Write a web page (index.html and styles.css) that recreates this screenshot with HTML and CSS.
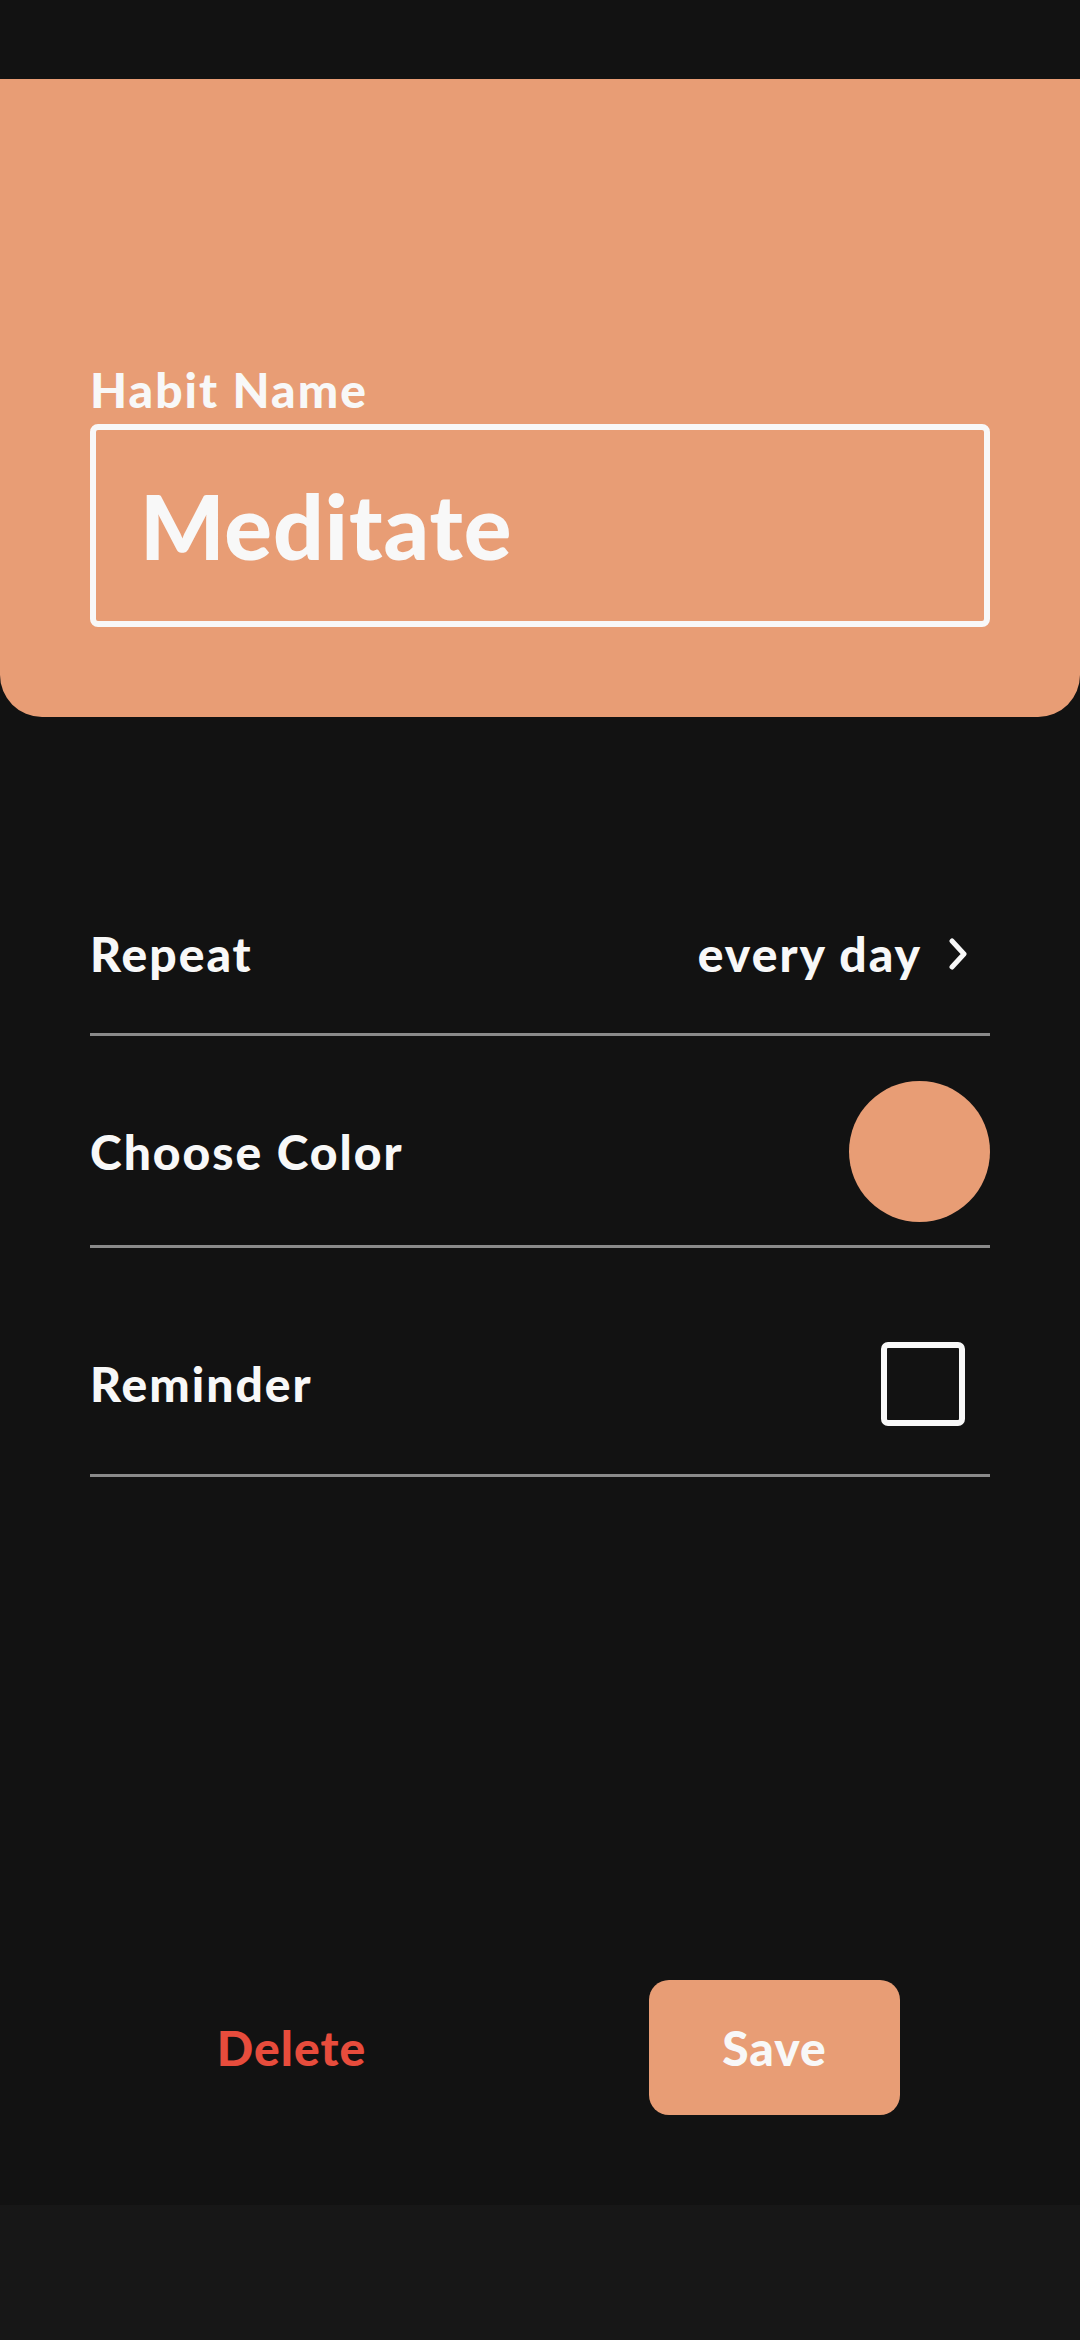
FILE: index.html
```html
<!DOCTYPE html>
<html lang="en">
<head>
<meta charset="utf-8">
<title>Edit Habit</title>
<link rel="stylesheet" href="styles.css">
</head>
<body>
<div class="page">
  <div class="status-bar"></div>
  <header class="header">
    <label class="field-label" for="habit-name">Habit Name</label>
    <input id="habit-name" class="name-input" type="text" value="Meditate">
  </header>
  <main class="content">
    <section class="settings">
      <div class="row row-repeat">
        <span class="row-label">Repeat</span>
        <span class="row-value"><span class="value-text">every day</span>
          <svg class="chevron" width="20" height="32" viewBox="0 0 20 32"><polyline points="4,3 16,16 4,29" fill="none" stroke="#f8f8f8" stroke-width="5" stroke-linecap="round" stroke-linejoin="round"/></svg>
        </span>
      </div>
      <div class="row row-color">
        <span class="row-label">Choose Color</span>
        <span class="swatch"></span>
      </div>
      <div class="row row-reminder">
        <span class="row-label">Reminder</span>
        <span class="checkbox"></span>
      </div>
    </section>
    <div class="actions">
      <button class="btn btn-delete">Delete</button>
      <button class="btn btn-save">Save</button>
    </div>
  </main>
  <div class="nav-bar"></div>
</div>
</body>
</html>
```

FILE: styles.css
```css
* { box-sizing: border-box; }
html, body { margin: 0; padding: 0; }
body {
  background: #121212;
  font-family: "Lato", "Noto Sans", sans-serif;
  color: #f8f8f8;
}
.page {
  width: 1080px;
  height: 2340px;
  display: flex;
  flex-direction: column;
}
.status-bar {
  height: 79px;
  background: #121212;
  flex: none;
}
.header {
  flex: none;
  height: 638px;
  background: #e89d75;
  border-radius: 0 0 42px 42px;
  padding: 287px 90px 90px;
  display: flex;
  flex-direction: column;
}
.field-label {
  font-size: 48px;
  line-height: 48px;
  font-weight: 900;
  letter-spacing: 2px;
  color: #f8f8f8;
  margin-bottom: 10px;
}
.name-input {
  height: 203px;
  width: 100%;
  background: transparent;
  border: 6px solid #f8f8f8;
  border-radius: 8px;
  padding: 0 40px 0 44px;
  font-family: "Lato", "Noto Sans", sans-serif;
  font-size: 89px;
  font-weight: 900;
  letter-spacing: 1px;
  color: #f8f8f8;
  outline: none;
}
.content {
  flex: 1;
  display: flex;
  flex-direction: column;
  padding: 213px 90px 0;
}
.row {
  display: flex;
  align-items: center;
  justify-content: space-between;
  border-bottom: 3px solid #8a8a8a;
}
.row-label, .row-value {
  font-size: 48px;
  line-height: 48px;
  font-weight: 900;
  letter-spacing: 2px;
}
.row-value {
  display: flex;
  align-items: center;
  gap: 26px;
  padding-right: 22px;
}
.row-repeat { padding: 0 0 55px; }
.row-color { padding: 45px 0 23px; }
.row-reminder { padding: 94px 0 48px; }
.swatch {
  width: 141px;
  height: 141px;
  border-radius: 50%;
  background: #e89d75;
}
.checkbox {
  width: 84px;
  height: 84px;
  border: 6px solid #f8f8f8;
  border-radius: 7px;
  margin-right: 25px;
}
.actions {
  margin-top: auto;
  padding: 0 0 90px 76px;
  display: flex;
  align-items: center;
  gap: 232px;
}
.btn {
  width: 251px;
  height: 135px;
  border: none;
  font-family: "Lato", "Noto Sans", sans-serif;
  font-size: 48px;
  font-weight: 900;
  letter-spacing: 1px;
  cursor: pointer;
}
.btn-delete {
  background: transparent;
  color: #e74c3c;
}
.btn-save {
  background: #e89d75;
  color: #f8f8f8;
  border-radius: 20px;
}
.nav-bar {
  flex: none;
  height: 135px;
  background: #171717;
}
```
